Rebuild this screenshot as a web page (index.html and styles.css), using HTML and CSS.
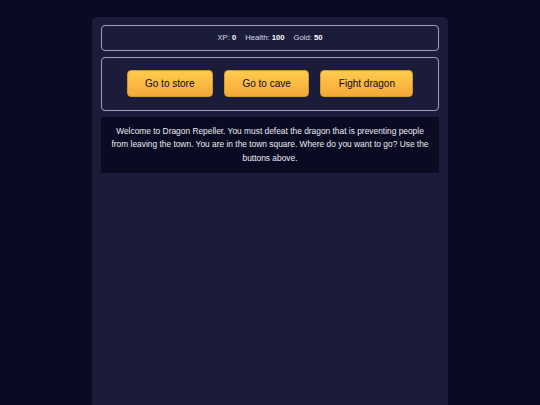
FILE: index.html
```html
<!DOCTYPE html>
<html lang="en">
<head>
<meta charset="utf-8">
<title>Dragon Repeller</title>
<link rel="stylesheet" href="styles.css">
</head>
<body>
<div class="game">
  <div class="stats">
    <span class="stat">XP: <strong>0</strong></span>
    <span class="stat">Health: <strong>100</strong></span>
    <span class="stat">Gold: <strong>50</strong></span>
  </div>
  <div class="controls">
    <button class="btn">Go to store</button>
    <button class="btn">Go to cave</button>
    <button class="btn">Fight dragon</button>
  </div>
  <div class="text">Welcome to Dragon Repeller. You must defeat the dragon that is preventing people from leaving the town. You are in the town square. Where do you want to go? Use the buttons above.</div>
</div>
</body>
</html>
```
FILE: styles.css
```css
html, body {
  margin: 0;
  padding: 0;
  background: #0a0a23;
  height: 100%;
  overflow: hidden;
}
body {
  font-family: "Liberation Sans", Arial, sans-serif;
  color: #ffffff;
}
.game {
  width: 356px;
  box-sizing: border-box;
  margin: 17px auto 0;
  padding: 8px 9px;
  min-height: calc(100vh - 17px);
  background: #1b1b3a;
  border-radius: 5px 5px 0 0;
  display: flex;
  flex-direction: column;
  gap: 6px;
}
.stats {
  border: 1px solid #9d9dbd;
  border-radius: 4px;
  padding: 7px 0;
  font-size: 7.7px;
  line-height: 10px;
  color: #dcdce8;
  display: flex;
  justify-content: center;
  gap: 9px;
}
.stats strong {
  color: #ffffff;
  font-weight: bold;
}
.controls {
  border: 1px solid #9d9dbd;
  border-radius: 4px;
  padding: 12px 0 13px;
  display: flex;
  justify-content: center;
  gap: 11px;
}
.btn {
  height: 27px;
  box-sizing: border-box;
  padding: 0 17.5px;
  font-family: "Liberation Sans", Arial, sans-serif;
  font-size: 10px;
  color: #0a0a23;
  background: linear-gradient(#ffcc4c, #f5a83a);
  border: 1px solid #d8952e;
  border-radius: 4px;
  cursor: pointer;
}
.text {
  background: #0a0a23;
  color: #ececf3;
  padding: 8px;
  font-size: 8.4px;
  line-height: 13.3px;
  text-align: center;
}
```
